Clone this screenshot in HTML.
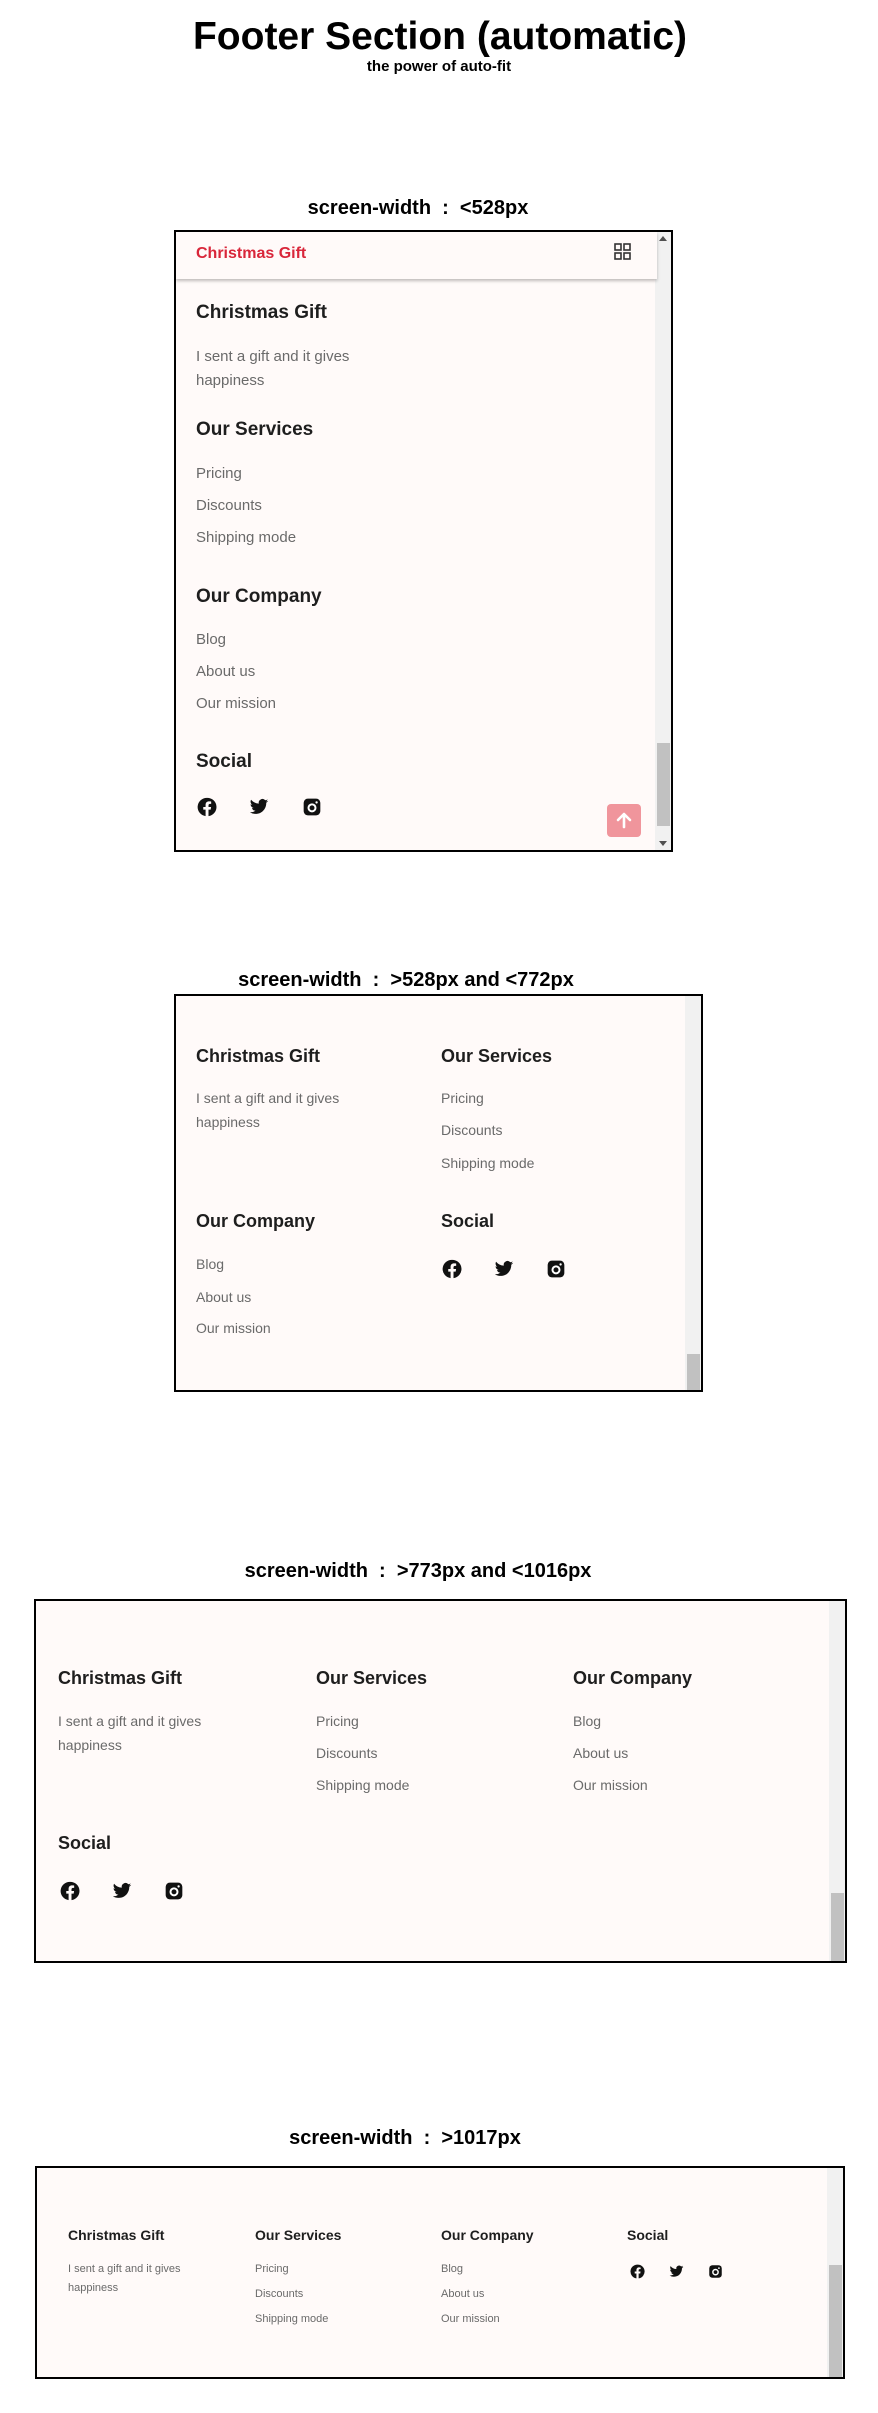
<!DOCTYPE html>
<html><head><meta charset="utf-8"><style>
*{margin:0;padding:0;box-sizing:border-box}
body{width:878px;height:2413px;background:#fff;position:relative;font-family:"Liberation Sans",sans-serif;overflow:hidden}
.t{position:absolute;line-height:1;white-space:nowrap}
.c{transform:translateX(-50%)}
.lbl{font-weight:700;font-size:20px;color:#000}
.box{position:absolute;border:2px solid #000;background:#fffaf9;overflow:hidden}
.sb{position:absolute;top:0;right:0;width:16px;height:100%;background:#f1f1f1}
.th{position:absolute;right:1px;width:13px;background:#c1c1c1}
.h{color:#1e1e1e;font-weight:700}
.l{color:#6a6a6a}
svg{position:absolute}
</style></head><body>
<div class="t c" style="left:440px;top:17px;font-size:39px;font-weight:700">Footer Section (automatic)</div>
<div class="t c" style="left:439px;top:59px;font-size:15px;font-weight:700">the power of auto-fit</div>

<!-- section 1 -->
<div class="t c lbl" style="left:418px;top:198px">screen-width &nbsp;:&nbsp; &lt;528px</div>
<div class="box" style="left:174px;top:230px;width:499px;height:622px">
 <div class="sb"><div class="th" style="top:511px;height:83px"></div>
  <div style="position:absolute;top:4px;left:4px;width:0;height:0;border-left:4px solid transparent;border-right:4px solid transparent;border-bottom:5px solid #505050"></div>
  <div style="position:absolute;bottom:4px;left:4px;width:0;height:0;border-left:4px solid transparent;border-right:4px solid transparent;border-top:5px solid #505050"></div>
 </div>
 <div style="position:absolute;left:0;top:0;width:481px;height:47px;background:#fffaf9;box-shadow:0 2px 3px rgba(0,0,0,.25)"></div>
</div>
<div class="t" style="left:196px;top:246px;font-size:16px;color:#d9263a;font-weight:700">Christmas Gift</div>
<svg style="left:614px;top:243px" width="17" height="17" viewBox="0 0 17 17" fill="none" stroke="#333" stroke-width="1.6"><rect x="1" y="1" width="6" height="6"/><rect x="10" y="1" width="6" height="6"/><rect x="1" y="10" width="6" height="6"/><rect x="10" y="10" width="6" height="6"/></svg>
<div class="t h" style="left:196px;top:303px;font-size:19px">Christmas Gift</div>
<div class="t l" style="left:196px;top:349px;font-size:15px">I sent a gift and it gives</div>
<div class="t l" style="left:196px;top:373px;font-size:15px">happiness</div>
<div class="t h" style="left:196px;top:420px;font-size:19px">Our Services</div>
<div class="t l" style="left:196px;top:466px;font-size:15px">Pricing</div>
<div class="t l" style="left:196px;top:498px;font-size:15px">Discounts</div>
<div class="t l" style="left:196px;top:530px;font-size:15px">Shipping mode</div>
<div class="t h" style="left:196px;top:587px;font-size:19px">Our Company</div>
<div class="t l" style="left:196px;top:632px;font-size:15px">Blog</div>
<div class="t l" style="left:196px;top:664px;font-size:15px">About us</div>
<div class="t l" style="left:196px;top:696px;font-size:15px">Our mission</div>
<div class="t h" style="left:196px;top:752px;font-size:19px">Social</div>
<div style="position:absolute;left:607px;top:804px;width:34px;height:33px;background:#f0959c;border-radius:4px"></div>
<svg style="left:615px;top:811px" width="18" height="18" viewBox="0 0 18 18" fill="none" stroke="#fff" stroke-width="2.6" stroke-linecap="round" stroke-linejoin="round"><path d="M9 16V3M3 9l6-6 6 6"/></svg>

<!-- section 2 -->
<div class="t c lbl" style="left:406px;top:970px">screen-width &nbsp;:&nbsp; &gt;528px and &lt;772px</div>
<div class="box" style="left:174px;top:994px;width:529px;height:398px">
 <div class="sb"><div class="th" style="top:358px;height:41px"></div></div>
</div>
<div class="t h" style="left:196px;top:1047px;font-size:18px">Christmas Gift</div>
<div class="t l" style="left:196px;top:1091px;font-size:14px">I sent a gift and it gives</div>
<div class="t l" style="left:196px;top:1115px;font-size:14px">happiness</div>
<div class="t h" style="left:441px;top:1047px;font-size:18px">Our Services</div>
<div class="t l" style="left:441px;top:1091px;font-size:14px">Pricing</div>
<div class="t l" style="left:441px;top:1123px;font-size:14px">Discounts</div>
<div class="t l" style="left:441px;top:1156px;font-size:14px">Shipping mode</div>
<div class="t h" style="left:196px;top:1212px;font-size:18px">Our Company</div>
<div class="t l" style="left:196px;top:1257px;font-size:14px">Blog</div>
<div class="t l" style="left:196px;top:1290px;font-size:14px">About us</div>
<div class="t l" style="left:196px;top:1321px;font-size:14px">Our mission</div>
<div class="t h" style="left:441px;top:1212px;font-size:18px">Social</div>

<!-- section 3 -->
<div class="t c lbl" style="left:418px;top:1561px">screen-width &nbsp;:&nbsp; &gt;773px and &lt;1016px</div>
<div class="box" style="left:34px;top:1599px;width:813px;height:364px">
 <div class="sb"><div class="th" style="top:292px;height:74px"></div></div>
</div>
<div class="t h" style="left:58px;top:1669px;font-size:18px">Christmas Gift</div>
<div class="t l" style="left:58px;top:1714px;font-size:14px">I sent a gift and it gives</div>
<div class="t l" style="left:58px;top:1738px;font-size:14px">happiness</div>
<div class="t h" style="left:316px;top:1669px;font-size:18px">Our Services</div>
<div class="t l" style="left:316px;top:1714px;font-size:14px">Pricing</div>
<div class="t l" style="left:316px;top:1746px;font-size:14px">Discounts</div>
<div class="t l" style="left:316px;top:1778px;font-size:14px">Shipping mode</div>
<div class="t h" style="left:573px;top:1669px;font-size:18px">Our Company</div>
<div class="t l" style="left:573px;top:1714px;font-size:14px">Blog</div>
<div class="t l" style="left:573px;top:1746px;font-size:14px">About us</div>
<div class="t l" style="left:573px;top:1778px;font-size:14px">Our mission</div>
<div class="t h" style="left:58px;top:1834px;font-size:18px">Social</div>

<!-- section 4 -->
<div class="t c lbl" style="left:405px;top:2128px">screen-width &nbsp;:&nbsp; &gt;1017px</div>
<div class="box" style="left:35px;top:2166px;width:810px;height:213px">
 <div class="sb"><div class="th" style="top:97px;height:116px"></div></div>
</div>
<div class="t h" style="left:68px;top:2228px;font-size:14px">Christmas Gift</div>
<div class="t l" style="left:68px;top:2264px;font-size:11px">I sent a gift and it gives</div>
<div class="t l" style="left:68px;top:2283px;font-size:11px">happiness</div>
<div class="t h" style="left:255px;top:2228px;font-size:14px">Our Services</div>
<div class="t l" style="left:255px;top:2264px;font-size:11px">Pricing</div>
<div class="t l" style="left:255px;top:2289px;font-size:11px">Discounts</div>
<div class="t l" style="left:255px;top:2314px;font-size:11px">Shipping mode</div>
<div class="t h" style="left:441px;top:2228px;font-size:14px">Our Company</div>
<div class="t l" style="left:441px;top:2264px;font-size:11px">Blog</div>
<div class="t l" style="left:441px;top:2289px;font-size:11px">About us</div>
<div class="t l" style="left:441px;top:2314px;font-size:11px">Our mission</div>
<div class="t h" style="left:627px;top:2228px;font-size:14px">Social</div>

<!-- icons: fb, tw, ig -->
<svg style="left:197px;top:797px" width="20" height="20" viewBox="0 0 24 24"><path fill="#111" d="M12 1a11 11 0 0 0-1.7 21.9V15.2H7.5V12h2.8V9.6c0-2.8 1.6-4.3 4.2-4.3 1.2 0 2.5.2 2.5.2v2.7h-1.4c-1.4 0-1.8.9-1.8 1.8V12h3.1l-.5 3.2h-2.6v7.7A11 11 0 0 0 12 1z"/></svg>
<svg style="left:249px;top:797px" width="20" height="20" viewBox="0 0 24 24"><path fill="#111" d="M23 4.6a9 9 0 0 1-2.6.7 4.5 4.5 0 0 0 2-2.5 9 9 0 0 1-2.9 1.1A4.5 4.5 0 0 0 11.8 8 12.8 12.8 0 0 1 2.5 3.3a4.5 4.5 0 0 0 1.4 6 4.5 4.5 0 0 1-2-.6 4.5 4.5 0 0 0 3.6 4.5 4.5 4.5 0 0 1-2 .1 4.5 4.5 0 0 0 4.2 3.1A9 9 0 0 1 1 18.3 12.8 12.8 0 0 0 7.9 20.3c8.3 0 12.8-6.9 12.8-12.8v-.6A9 9 0 0 0 23 4.6z"/></svg>
<svg style="left:302px;top:797px" width="20" height="20" viewBox="0 0 24 24"><rect x="2" y="2" width="20" height="20" rx="5" fill="#111"/><circle cx="12" cy="13" r="4.2" fill="none" stroke="#fff" stroke-width="2.4"/><circle cx="17.5" cy="6.5" r="1.4" fill="#fff"/></svg>

<svg style="left:442px;top:1259px" width="20" height="20" viewBox="0 0 24 24"><path fill="#111" d="M12 1a11 11 0 0 0-1.7 21.9V15.2H7.5V12h2.8V9.6c0-2.8 1.6-4.3 4.2-4.3 1.2 0 2.5.2 2.5.2v2.7h-1.4c-1.4 0-1.8.9-1.8 1.8V12h3.1l-.5 3.2h-2.6v7.7A11 11 0 0 0 12 1z"/></svg>
<svg style="left:494px;top:1259px" width="20" height="20" viewBox="0 0 24 24"><path fill="#111" d="M23 4.6a9 9 0 0 1-2.6.7 4.5 4.5 0 0 0 2-2.5 9 9 0 0 1-2.9 1.1A4.5 4.5 0 0 0 11.8 8 12.8 12.8 0 0 1 2.5 3.3a4.5 4.5 0 0 0 1.4 6 4.5 4.5 0 0 1-2-.6 4.5 4.5 0 0 0 3.6 4.5 4.5 4.5 0 0 1-2 .1 4.5 4.5 0 0 0 4.2 3.1A9 9 0 0 1 1 18.3 12.8 12.8 0 0 0 7.9 20.3c8.3 0 12.8-6.9 12.8-12.8v-.6A9 9 0 0 0 23 4.6z"/></svg>
<svg style="left:546px;top:1259px" width="20" height="20" viewBox="0 0 24 24"><rect x="2" y="2" width="20" height="20" rx="5" fill="#111"/><circle cx="12" cy="13" r="4.2" fill="none" stroke="#fff" stroke-width="2.4"/><circle cx="17.5" cy="6.5" r="1.4" fill="#fff"/></svg>

<svg style="left:60px;top:1881px" width="20" height="20" viewBox="0 0 24 24"><path fill="#111" d="M12 1a11 11 0 0 0-1.7 21.9V15.2H7.5V12h2.8V9.6c0-2.8 1.6-4.3 4.2-4.3 1.2 0 2.5.2 2.5.2v2.7h-1.4c-1.4 0-1.8.9-1.8 1.8V12h3.1l-.5 3.2h-2.6v7.7A11 11 0 0 0 12 1z"/></svg>
<svg style="left:112px;top:1881px" width="20" height="20" viewBox="0 0 24 24"><path fill="#111" d="M23 4.6a9 9 0 0 1-2.6.7 4.5 4.5 0 0 0 2-2.5 9 9 0 0 1-2.9 1.1A4.5 4.5 0 0 0 11.8 8 12.8 12.8 0 0 1 2.5 3.3a4.5 4.5 0 0 0 1.4 6 4.5 4.5 0 0 1-2-.6 4.5 4.5 0 0 0 3.6 4.5 4.5 4.5 0 0 1-2 .1 4.5 4.5 0 0 0 4.2 3.1A9 9 0 0 1 1 18.3 12.8 12.8 0 0 0 7.9 20.3c8.3 0 12.8-6.9 12.8-12.8v-.6A9 9 0 0 0 23 4.6z"/></svg>
<svg style="left:164px;top:1881px" width="20" height="20" viewBox="0 0 24 24"><rect x="2" y="2" width="20" height="20" rx="5" fill="#111"/><circle cx="12" cy="13" r="4.2" fill="none" stroke="#fff" stroke-width="2.4"/><circle cx="17.5" cy="6.5" r="1.4" fill="#fff"/></svg>

<svg style="left:630px;top:2264px" width="15" height="15" viewBox="0 0 24 24"><path fill="#111" d="M12 1a11 11 0 0 0-1.7 21.9V15.2H7.5V12h2.8V9.6c0-2.8 1.6-4.3 4.2-4.3 1.2 0 2.5.2 2.5.2v2.7h-1.4c-1.4 0-1.8.9-1.8 1.8V12h3.1l-.5 3.2h-2.6v7.7A11 11 0 0 0 12 1z"/></svg>
<svg style="left:669px;top:2264px" width="15" height="15" viewBox="0 0 24 24"><path fill="#111" d="M23 4.6a9 9 0 0 1-2.6.7 4.5 4.5 0 0 0 2-2.5 9 9 0 0 1-2.9 1.1A4.5 4.5 0 0 0 11.8 8 12.8 12.8 0 0 1 2.5 3.3a4.5 4.5 0 0 0 1.4 6 4.5 4.5 0 0 1-2-.6 4.5 4.5 0 0 0 3.6 4.5 4.5 4.5 0 0 1-2 .1 4.5 4.5 0 0 0 4.2 3.1A9 9 0 0 1 1 18.3 12.8 12.8 0 0 0 7.9 20.3c8.3 0 12.8-6.9 12.8-12.8v-.6A9 9 0 0 0 23 4.6z"/></svg>
<svg style="left:708px;top:2264px" width="15" height="15" viewBox="0 0 24 24"><rect x="2" y="2" width="20" height="20" rx="5" fill="#111"/><circle cx="12" cy="13" r="4.2" fill="none" stroke="#fff" stroke-width="2.4"/><circle cx="17.5" cy="6.5" r="1.4" fill="#fff"/></svg>
</body></html>
